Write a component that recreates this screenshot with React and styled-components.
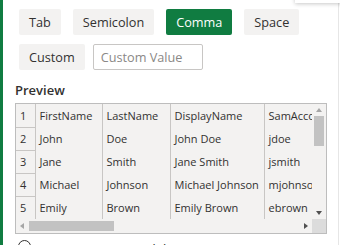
import styled, { createGlobalStyle } from "styled-components";

const Global = createGlobalStyle`
  html, body { margin: 0; padding: 0; background: #fff; }
  body { font-family: "Open Sans", "Noto Sans", sans-serif; color: #323130; overflow: hidden; }
`;

const Page = styled.div`
  position: relative;
  width: 340px;
  height: 245px;
  box-sizing: border-box;
  border-left: 3px solid #107c41;
  padding: 9px 0 0 12px;
  overflow: hidden;
`;

const GridLine = styled.div`
  position: absolute;
  top: 0;
  bottom: 0;
  left: ${(p) => p.$left}px;
  width: 1px;
  background: #e6e6e6;
`;

const Popup = styled.div`
  position: absolute;
  top: -30px;
  left: 292px;
  width: 80px;
  height: 33px;
  background: #fff;
  box-shadow: 0 1px 4px rgba(0, 0, 0, 0.22);
`;

const Toolbar = styled.div`
  display: flex;
  flex-direction: column;
  gap: 9px;
  padding-left: 4px;
`;

const Row = styled.div`
  display: flex;
  gap: 12px;
  align-items: center;
`;

const Chip = styled.button`
  height: 26px;
  padding: 0 10px;
  border: 0;
  border-radius: 2px;
  font-family: inherit;
  font-size: 12.7px;
  color: ${(p) => (p.$active ? "#fff" : "#323130")};
  background: ${(p) => (p.$active ? "#107c41" : "#f3f2f1")};
`;

const Input = styled.input`
  box-sizing: border-box;
  width: 110px;
  height: 26px;
  margin-left: -4px;
  padding: 0 7px;
  border: 1px solid #c8c6c4;
  border-radius: 2px;
  font-family: inherit;
  font-size: 12.7px;
  color: #323130;
  &::placeholder { color: #8a8886; }
`;

const Heading = styled.div`
  margin-top: 10px;
  font-size: 13px;
  font-weight: 600;
  line-height: 20px;
`;

const Frame = styled.div`
  margin-top: 3px;
  width: 312px;
  box-sizing: border-box;
  border: 1px solid #bdbdbd;
  background: #f3f2f1;
  display: grid;
  grid-template-columns: 1fr 14px;
  grid-template-rows: 115px 14px;
`;

const Clip = styled.div`
  overflow: hidden;
`;

const Table = styled.table`
  border-collapse: collapse;
  table-layout: fixed;
  width: 340px;
  font-size: 11px;
`;

const Cell = styled.td`
  height: 23px;
  padding: 0 0 0 4px;
  box-sizing: border-box;
  white-space: nowrap;
  overflow: hidden;
  border-left: ${(p) => (p.$first ? "0" : "1px solid #c8c6c4")};
  border-bottom: ${(p) => (p.$num ? "1px solid #c8c6c4" : "0")};
  background: #f3f2f1;
`;

const VBar = styled.div`
  display: flex;
  flex-direction: column;
  align-items: center;
  padding: 4px 0;
  box-sizing: border-box;
`;

const HBar = styled.div`
  display: flex;
  align-items: center;
  padding: 0 4px;
  box-sizing: border-box;
`;

const Thumb = styled.div`
  background: #c2c2c2;
  ${(p) =>
    p.$vertical
      ? "width: 10px; height: 30px; margin-top: 4px;"
      : "height: 10px; width: 85px; margin-left: 5px;"}
`;

const Spacer = styled.div`
  flex: 1;
`;

const Corner = styled.div`
  background: #dcdcdc;
`;

const Arrow = styled.div`
  width: 0;
  height: 0;
  border: 3px solid transparent;
  ${(p) => p.$dir === "up" && `border-bottom: 4px solid ${p.$c}; border-top-width: 0;`}
  ${(p) => p.$dir === "down" && `border-top: 4px solid ${p.$c}; border-bottom-width: 0;`}
  ${(p) => p.$dir === "left" && `border-right: 4px solid ${p.$c}; border-left-width: 0;`}
  ${(p) => p.$dir === "right" && `border-left: 4px solid ${p.$c}; border-right-width: 0;`}
`;

const Option = styled.div`
  display: flex;
  align-items: flex-start;
  gap: 7px;
  margin-top: 6px;
  padding-left: 3px;
  font-size: 13px;
  line-height: 16px;
`;

const Radio = styled.span`
  flex: none;
  width: 11px;
  height: 11px;
  border: 1px solid #323130;
  border-radius: 50%;
`;

const Label = styled.span`
  margin-top: 1px;
`;

const rows = [
  ["FirstName", "LastName", "DisplayName", "SamAccountName"],
  ["John", "Doe", "John Doe", "jdoe"],
  ["Jane", "Smith", "Jane Smith", "jsmith"],
  ["Michael", "Johnson", "Michael Johnson", "mjohnson"],
  ["Emily", "Brown", "Emily Brown", "ebrown"],
];

const widths = [19, 67, 68, 94, 92];

export default function App() {
  return (
    <Page>
      <Global />
      <GridLine $left={335} />
      <Popup />
      <Toolbar>
        <Row>
          <Chip>Tab</Chip>
          <Chip>Semicolon</Chip>
          <Chip $active>Comma</Chip>
          <Chip>Space</Chip>
        </Row>
        <Row>
          <Chip>Custom</Chip>
          <Input placeholder="Custom Value" />
        </Row>
      </Toolbar>
      <Heading>Preview</Heading>
      <Frame>
        <Clip>
          <Table>
            <colgroup>
              {widths.map((w, i) => (
                <col key={i} style={{ width: w }} />
              ))}
            </colgroup>
            <tbody>
              {rows.map((r, i) => (
                <tr key={i}>
                  <Cell $num $first>{i + 1}</Cell>
                  {r.map((c, j) => (
                    <Cell key={j}>{c}</Cell>
                  ))}
                </tr>
              ))}
            </tbody>
          </Table>
        </Clip>
        <VBar>
          <Arrow $dir="up" $c="#a6a6a6" />
          <Thumb $vertical />
          <Spacer />
          <Arrow $dir="down" $c="#505050" />
        </VBar>
        <HBar>
          <Arrow $dir="left" $c="#a6a6a6" />
          <Thumb />
          <Spacer />
          <Arrow $dir="right" $c="#505050" />
        </HBar>
        <Corner />
      </Frame>
      <Option>
        <Radio />
        <Label>Treat consecutive delimiters as one</Label>
      </Option>
    </Page>
  );
}
